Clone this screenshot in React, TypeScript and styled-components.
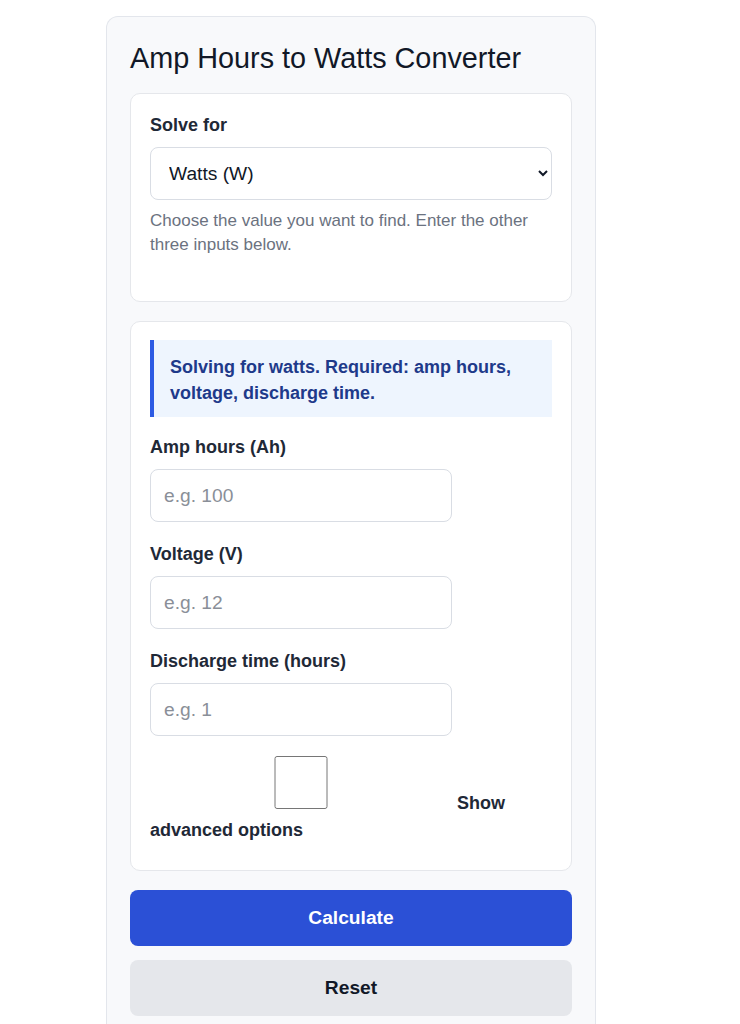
import styled, { createGlobalStyle } from "styled-components";

const GlobalStyle = createGlobalStyle`
  body {
    margin: 0;
    background: #ffffff;
    font-family: "Liberation Sans", Arial, sans-serif;
    color: #111827;
  }
`;

const Page = styled.div`
  padding: 16px 0 0 106px;
`;

const Panel = styled.div`
  box-sizing: border-box;
  width: 490px;
  background: #f8f9fb;
  border: 1px solid #e3e6ec;
  border-bottom: none;
  border-radius: 12px 12px 0 0;
  padding: 24px 23px 8px;
`;

const Title = styled.h1`
  margin: 0 0 18px;
  font-size: 28.8px;
  font-weight: 400;
  line-height: 34px;
  color: #111827;
`;

const Card = styled.section<{ $top: number; $bottom: number }>`
  background: #ffffff;
  border: 1px solid #e5e7eb;
  border-radius: 10px;
  padding: ${({ $top }) => $top}px 19px ${({ $bottom }) => $bottom}px;
  margin-bottom: 19px;
`;

const FieldLabel = styled.label`
  display: block;
  font-size: 18px;
  font-weight: 700;
  line-height: 24px;
  color: #1f2937;
  margin-bottom: 10px;
`;

const Select = styled.select`
  box-sizing: border-box;
  width: 100%;
  height: 53px;
  padding: 0 10px 0 14px;
  font-family: inherit;
  font-size: 19.2px;
  color: #111827;
  background: #ffffff;
  border: 1px solid #d9dde4;
  border-radius: 8px;
`;

const Help = styled.p`
  margin: 9px 0 0;
  font-size: 17px;
  line-height: 24px;
  color: #6b7280;
`;

const Notice = styled.div`
  background: #eef5fe;
  border-left: 4px solid #2d5be3;
  padding: 14px 16px 11px;
  font-size: 18px;
  font-weight: 700;
  line-height: 26px;
  color: #1e3a8a;
  margin-bottom: 18px;
`;

const Field = styled.div`
  margin-bottom: 20px;
`;

const Input = styled.input`
  box-sizing: border-box;
  display: block;
  width: 302px;
  height: 53px;
  padding: 0 13px;
  font-family: inherit;
  font-size: 19.2px;
  color: #111827;
  background: #ffffff;
  border: 1px solid #d9dde4;
  border-radius: 8px;

  &::placeholder {
    color: #8a8f98;
  }
`;

const CheckLabel = styled.label`
  display: block;
  font-size: 18px;
  font-weight: 700;
  line-height: 27px;
  color: #1f2937;
`;

const Check = styled.input`
  width: 302px;
  height: 53px;
  margin: 0;
  vertical-align: baseline;
`;

const Button = styled.button<{ $primary?: boolean }>`
  display: block;
  width: 100%;
  height: 56px;
  margin-bottom: 14px;
  border: none;
  border-radius: 8px;
  font-family: inherit;
  font-size: 19.2px;
  font-weight: 700;
  background: ${({ $primary }) => ($primary ? "#2b50d6" : "#e5e7eb")};
  color: ${({ $primary }) => ($primary ? "#ffffff" : "#111827")};
`;

const fields = [
  { label: "Amp hours (Ah)", placeholder: "e.g. 100" },
  { label: "Voltage (V)", placeholder: "e.g. 12" },
  { label: "Discharge time (hours)", placeholder: "e.g. 1" },
];

export default function App() {
  return (
    <Page>
      <GlobalStyle />
      <Panel>
        <Title>Amp Hours to Watts Converter</Title>
        <Card $top={19} $bottom={44}>
          <FieldLabel>Solve for</FieldLabel>
          <Select defaultValue="w">
            <option value="w">Watts (W)</option>
            <option value="ah">Amp hours (Ah)</option>
            <option value="v">Voltage (V)</option>
            <option value="t">Discharge time (hours)</option>
          </Select>
          <Help>Choose the value you want to find. Enter the other three inputs below.</Help>
        </Card>
        <Card $top={18} $bottom={26}>
          <Notice>Solving for watts. Required: amp hours, voltage, discharge time.</Notice>
          {fields.map((f) => (
            <Field key={f.label}>
              <FieldLabel>{f.label}</FieldLabel>
              <Input type="number" placeholder={f.placeholder} />
            </Field>
          ))}
          <CheckLabel>
            <Check type="checkbox" /> Show advanced options
          </CheckLabel>
        </Card>
        <Button $primary>Calculate</Button>
        <Button>Reset</Button>
      </Panel>
    </Page>
  );
}
